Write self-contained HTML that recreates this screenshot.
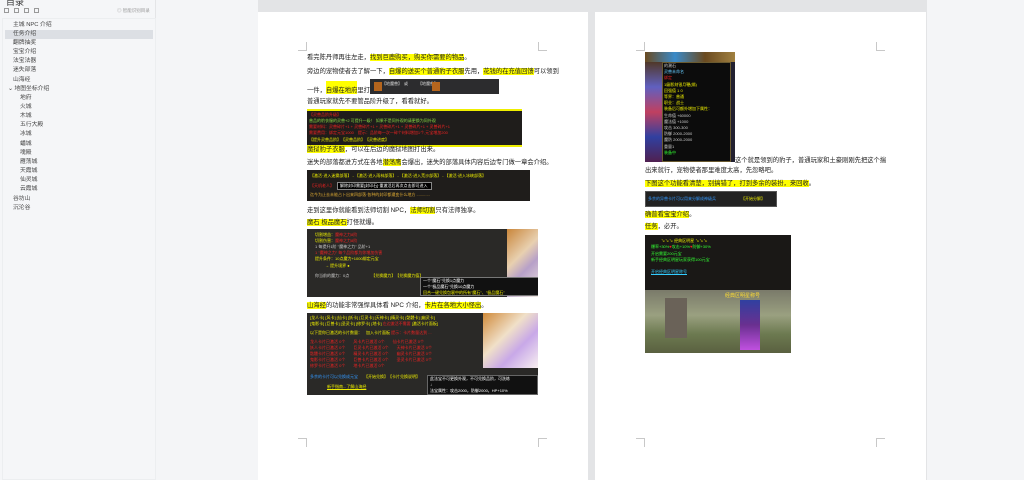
<!DOCTYPE html>
<html><head><meta charset="utf-8"><style>
*{margin:0;padding:0;box-sizing:border-box}
body{width:1024px;height:480px;overflow:hidden;background:#e3e4e6;position:relative;font-family:"Liberation Sans","Noto Sans CJK SC",sans-serif}
.a{position:absolute}
#side{left:0;top:0;width:156px;height:480px;background:#f5f6f8;border-right:1px solid #e4e5e7}
#side .it{position:absolute;left:13px;font-size:5.8px;color:#444;white-space:nowrap;line-height:9px}
.page{background:#fff;top:12px;height:468px}
.t{position:absolute;font-size:6.3px;color:#222;white-space:nowrap;line-height:9px}
.h{background:#ffff00}
.img{position:absolute;background:#1f1d1b;overflow:hidden}
.c{position:absolute;width:9px;height:9px;border-color:#c8c8c8;border-style:solid;border-width:0}
.sm{position:absolute;font-size:4px;white-space:nowrap;line-height:6px}
.bx{position:absolute;top:8px;width:5px;height:5px;border:1px solid #999}
</style></head><body>
<div class="a" style="left:156px;top:0;width:102px;height:480px;background:#f4f5f7"></div>
<div class="a" style="left:927px;top:0;width:97px;height:480px;background:#f4f5f7"></div>
<div id="side" class="a">
<div class="a" style="left:6px;top:-5px;font-size:9px;color:#333">目录</div>
<div class="bx" style="left:4px"></div><div class="bx" style="left:14px"></div><div class="bx" style="left:24px"></div><div class="bx" style="left:34px"></div>
<div class="a" style="left:117px;top:8px;font-size:4.5px;color:#999">◎ 智能识别目录</div>
<div class="a" style="left:2px;top:18px;width:154px;height:462px;border:1px solid #eceef0"></div>
<div class="a" style="left:5px;top:30px;width:148px;height:9px;background:#dcdfe4"></div>
<div class="it" style="top:21px">主城 NPC 介绍</div>
<div class="it" style="top:30px">任务介绍</div>
<div class="it" style="top:39px">翻牌抽奖</div>
<div class="it" style="top:48px">宝宝介绍</div>
<div class="it" style="top:57px">法宝法器</div>
<div class="it" style="top:66px">迷失部落</div>
<div class="it" style="top:76px">山海经</div>
<div class="it" style="top:85px;left:8px">⌄ 地图坐标介绍</div>
<div class="it" style="top:94px;left:20px">地府</div>
<div class="it" style="top:103px;left:20px">火城</div>
<div class="it" style="top:112px;left:20px">木城</div>
<div class="it" style="top:121px;left:20px">五行大殿</div>
<div class="it" style="top:130px;left:20px">冰城</div>
<div class="it" style="top:140px;left:20px">蟠城</div>
<div class="it" style="top:149px;left:20px">魂殿</div>
<div class="it" style="top:158px;left:20px">雁荡城</div>
<div class="it" style="top:167px;left:20px">天霞城</div>
<div class="it" style="top:176px;left:20px">仙灵城</div>
<div class="it" style="top:185px;left:20px">云霞城</div>
<div class="it" style="top:195px">谷坊山</div>
<div class="it" style="top:204px">沉沦谷</div>
</div>

<div class="a page" style="left:258px;width:330px"></div>
<div class="a page" style="left:595px;width:331px"></div>
<div class="c" style="left:298px;top:42px;border-right-width:1px;border-bottom-width:1px"></div>
<div class="c" style="left:538px;top:42px;border-left-width:1px;border-bottom-width:1px"></div>
<div class="c" style="left:298px;top:438px;border-right-width:1px;border-top-width:1px"></div>
<div class="c" style="left:538px;top:438px;border-left-width:1px;border-top-width:1px"></div>
<div class="c" style="left:636px;top:42px;border-right-width:1px;border-bottom-width:1px"></div>
<div class="c" style="left:876px;top:42px;border-left-width:1px;border-bottom-width:1px"></div>
<div class="c" style="left:636px;top:438px;border-right-width:1px;border-top-width:1px"></div>
<div class="c" style="left:876px;top:438px;border-left-width:1px;border-top-width:1px"></div>

<!-- page 1 -->
<div class="t" style="left:307px;top:53px">看完陈丹师再往左走，<span class="h">找到巨鹿购买，购买你需要的物品</span>。</div>
<div class="t" style="left:307px;top:67px">旁边的宠物使者去了解一下，<span class="h">自爆的送买个普通豹子衣服</span>先用，<span class="h">花钱的在充值回馈</span>可以领到</div>
<div class="t" style="left:307px;top:86px">一件，<span class="h" style="padding-top:6px">自爆在地府</span>里打 BOSS 也可以获得</div>
<div class="img" style="left:370px;top:79px;width:129px;height:15px;background:#2c2c2e"><div class="sm" style="left:12px;top:2px;color:#ddd">【地魔兽】　或　　　【地魔兽】</div><div class="a" style="left:4px;top:3px;width:8px;height:9px;background:#b5651d"></div><div class="a" style="left:62px;top:3px;width:8px;height:9px;background:#b5651d"></div></div>
<div class="t" style="left:307px;top:97px">普通玩家就先不要管品阶升级了，看看就好。</div>
<div class="img" style="left:307px;top:109px;width:215px;height:38px;border-top:2px solid #ee0;border-bottom:2px solid #ee0">
<div class="sm" style="left:2px;top:1px;color:#e22">【灵兽品阶升级】</div>
<div class="sm" style="left:2px;top:7px;color:#8d4">普品的豹衣服的灵兽+2 可提升一级！ 如果不是同外观的请更换为同外观</div>
<div class="sm" style="left:2px;top:13px;color:#e22">需要材料：灵兽碎片+1 + 灵兽碎片+1 + 灵兽碎片+1 + 灵兽碎片+1 + 灵兽碎片+1</div>
<div class="sm" style="left:2px;top:19px;color:#e22">需要费用：绑定元宝1000　提示：品阶每一次一碎个材料增加1个,元宝增加200</div>
<div class="sm" style="left:2px;top:26px;color:#ee0">【提升灵兽品阶】　【灵兽品阶】　【灵兽进度】</div></div>
<div class="t" style="left:307px;top:145px"><span class="h">魔狱豹子衣服</span>，可以在后边的魔狱地图打出来。</div>
<div class="t" style="left:307px;top:158px">迷失的部落都进方式在各地<span class="h">潜荡鹰</span>会爆出，迷失的部落具体内容后边专门做一章会介绍。</div>
<div class="img" style="left:307px;top:170px;width:223px;height:31px">
<div class="sm" style="left:3px;top:3px;color:#ee0">【激活·进入迷雾部落】 - 【激活·进入雨林部落】 - 【激活·进入荒沙部落】 - 【激活·进入冰峡部落】</div>
<div class="a" style="left:30px;top:12px;width:95px;height:8px;background:#000;border:1px solid #888"></div>
<div class="sm" style="left:33px;top:13px;color:#fff">解除封印需要[封印石]·重激活后再次点击即可进入</div>
<div class="sm" style="left:3px;top:13px;color:#e22">【天机老人】</div>
<div class="sm" style="left:3px;top:22px;color:#da3">迄今为止去未能占卜出来四部落·各种的封印都遭变什么地方 ............</div></div>
<div class="t" style="left:307px;top:206px">走到这里你就能看到法师切割 NPC，<span class="h">法师切割</span>只有法师独享。</div>
<div class="t" style="left:307px;top:218px"><span class="h">魔石 极品魔石</span>打怪就爆。</div>
<div class="img" style="left:307px;top:229px;width:231px;height:68px;background:#2a2927">
<div class="a" style="left:200px;top:0;width:31px;height:68px;background:linear-gradient(135deg,#c9863a,#e8d0b0 40%,#b7a0c8 60%,#f0e8e0)"></div>
<div class="sm" style="left:8px;top:3px;color:#ee0">切割增益：<span style="color:#e22">魔神之力8阶</span></div>
<div class="sm" style="left:8px;top:9px;color:#ee0">切割伤害：<span style="color:#e22">魔神之力8阶</span></div>
<div class="sm" style="left:8px;top:15px;color:#ccc">1 每提升1阶 "魔神之力" 品阶+1</div>
<div class="sm" style="left:8px;top:21px;color:#e22">1 "魔神之力" 每个品阶都为你增加伤害</div>
<div class="sm" style="left:8px;top:27px;color:#ee0">提升条件：10点魔力+1000绑定元宝</div>
<div class="sm" style="left:18px;top:34px;color:#ee0">→ 提升境界 ●</div>
<div class="sm" style="left:8px;top:44px;color:#ccc">你当前的魔力：0点　　　　　　<span style="color:#ee0">【兑换魔力】　【兑换魔力值】</span></div>
<div class="a" style="left:113px;top:48px;width:133px;height:19px;background:#111;border:1px solid #777"></div>
<div class="sm" style="left:116px;top:49px;color:#fff">一个"魔石"兑换1点魔力<br>一个"极品魔石"兑换10点魔力<br><span style="color:#ee0">回合一键兑换包裹中的所有"魔石"、"极品魔石"</span></div></div>
<div class="t" style="left:307px;top:301px"><span class="h">山海经</span>的功能非常强悍具体看 NPC 介绍，<span class="h">卡片在各地大小怪出</span>。</div>
<div class="img" style="left:307px;top:313px;width:231px;height:82px;background:#2a2927">
<div class="a" style="left:176px;top:0;width:55px;height:55px;background:linear-gradient(135deg,#d08a3a,#f0e0c8 40%,#c8a8e8 65%,#f8f0f0)"></div>
<div class="sm" style="left:3px;top:2px;color:#ee0">[龙人卡] [风卡] [仙卡] [妖卡] [巨灵卡] [天神卡] [精灵卡] [骷髅卡] [幽灵卡]</div>
<div class="sm" style="left:3px;top:8px;color:#ee0">[鬼影卡] [巨兽卡] [圣灵卡] [修罗卡] [地卡] <span style="color:#e22">左边激活不需要</span> [激活卡片面板]</div>
<div class="sm" style="left:3px;top:17px;color:#ee0">以下是你已激活的卡片数量：　<span>加入卡片面板</span> <span style="color:#e22">提示：卡片数量达到 ...</span></div>
<div class="sm" style="left:3px;top:26px;color:#e22;line-height:6px">龙人卡片已激活 0个　　风卡片已激活 0个　　仙卡片已激活 0个<br>妖人卡片已激活 0个　　巨灵卡片已激活 0个　　天神卡片已激活 0个<br>骷髅卡片已激活 0个　　精灵卡片已激活 0个　　幽灵卡片已激活 0个<br>鬼影卡片已激活 0个　　巨兽卡片已激活 0个　　圣灵卡片已激活 0个<br>修罗卡片已激活 0个　　地卡片已激活 0个</div>
<div class="sm" style="left:3px;top:61px;color:#39f">多余的卡片可以兑换成元宝　　<span style="color:#ee0">【开始兑换】　【卡片兑换说明】</span></div>
<div class="sm" style="left:20px;top:71px;color:#ee0;text-decoration:underline">新手指南...了解山海经</div>
<div class="a" style="left:120px;top:62px;width:111px;height:20px;background:#111;border:1px solid #666"></div>
<div class="sm" style="left:123px;top:63px;color:#fff">此法宝不可更换外观，不可兑换品阶，可洗练<br>↓<br>法宝属性：攻击2000，防御2000，HP+10%</div></div>

<!-- page 2 -->
<div class="img" style="left:645px;top:52px;width:90px;height:110px;background:#222030">
<div class="a" style="left:0;top:0;width:90px;height:10px;background:linear-gradient(90deg,#6a4a20,#3a8ac8,#6a4a20,#a08040)"></div>
<div class="a" style="left:0;top:10px;width:17px;height:100px;background:linear-gradient(180deg,#503828,#6060c0,#c04060,#3040a0,#502050)"></div>
<div class="a" style="left:17px;top:10px;width:69px;height:100px;background:#0c0c0c;border:1px solid #6a5a30"></div>
<div class="sm" style="left:19px;top:11px;color:#ccc;line-height:6.2px">的潮石<br><span style="color:#6cf">灵兽未命名</span><br><span style="color:#e22">绑定</span><br><span style="color:#ee0">1级影刻银月鞭(绑)<br>回强值 1 0<br>等界：普通<br>职业：战士<br>装备后可额外增加下属性：</span><br>生命值 +60000<br>魔法值 +1000<br>攻击 300-300<br>防御 2000-2000<br>魔防 2000-2000<br>重量1<br><span style="color:#3f3">装备中</span></div></div>
<div class="t" style="left:735px;top:156px">这个就是领到的豹子，普通玩家和土豪刚刚先把这个揣</div>
<div class="t" style="left:645px;top:166px">出来就行，宠物使者那里难度太高，先忽略吧。</div>
<div class="t" style="left:645px;top:179px"><span class="h">下图这个功能看清楚，别搞错了，打到多余的装扮，来回收</span>。</div>
<div class="img" style="left:645px;top:191px;width:132px;height:16px;background:#222;border:1px solid #555">
<div class="sm" style="left:2px;top:4px;color:#39f">多余的异兽卡片可以用来分解成神级兵</div><div class="sm" style="left:95px;top:4px;color:#ee0">【开始分解】</div></div>
<div class="t" style="left:645px;top:210px"><span class="h">确普看宝宝介绍</span>。</div>
<div class="t" style="left:645px;top:222px"><span class="h">任务</span>，必开。</div>
<div class="img" style="left:645px;top:235px;width:146px;height:55px;background:#1a1816">
<div class="sm" style="left:16px;top:3px;color:#ee0">↘↘↘ 经典区明星 ↘↘↘</div>
<div class="sm" style="left:6px;top:9px;color:#3f3;line-height:6.5px">爆率+30%<span style="color:#e22">♥</span>攻击+10%<span style="color:#e22">♥</span>防御+30%<br>开启需要200元宝<br>新手经典区明星玩家获得100元宝</div>
<div class="sm" style="left:6px;top:34px;color:#3cf;text-decoration:underline">开启经典区明星称号</div></div>
<div class="img" style="left:645px;top:290px;width:146px;height:63px;background:linear-gradient(180deg,#7a7a6a,#9aa080 40%,#6c7a50 70%,#5a6040)">
<div class="a" style="left:20px;top:8px;width:22px;height:40px;background:#6a6258"></div>
<div class="a" style="left:95px;top:10px;width:20px;height:50px;background:linear-gradient(180deg,#3040a0,#6a3090,#c050e0)"></div>
<div class="sm" style="left:80px;top:3px;color:#fd3;font-size:5px">经典区明星称号</div></div>
</body></html>
